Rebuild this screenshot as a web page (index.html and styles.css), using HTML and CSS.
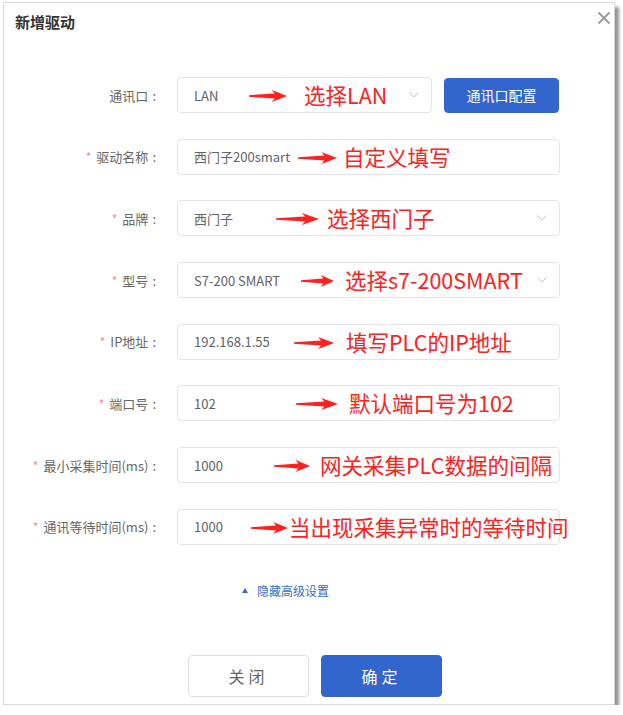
FILE: index.html
```html
<!DOCTYPE html>
<html lang="zh-CN">
<head>
    <meta charset="UTF-8">
    <meta name="viewport" content="width=device-width, initial-scale=1.0">
    <title>新增驱动</title>
    <link rel="stylesheet" href="styles.css">
</head>
<body>
    <div class="dialog">
        <div class="dialog-header">
            <span class="dialog-title">新增驱动</span>
            <svg class="close-icon" viewBox="0 0 14 14" width="14" height="14">
                <path d="M1.5 1.5 L12.5 12.5 M12.5 1.5 L1.5 12.5" stroke="#9a9a9a" stroke-width="1.8" fill="none"/>
            </svg>
        </div>

        <div class="form">
            <div class="form-row">
                <label class="form-label">通讯口<span class="colon">:</span></label>
                <div class="field field-short select">
                    <span class="value">LAN</span>
                    <svg class="chevron" viewBox="0 0 10 6" width="10" height="6"><path d="M0.5 0.5 L5 5 L9.5 0.5" stroke="#c0c4cc" fill="none"/></svg>
                    <div class="note note-1">
                        <svg class="arrow" viewBox="0 0 40 12" preserveAspectRatio="none"><polygon points="0,5.2 27,3.4 24,0 40,6 24,12 27,8.6 0,6.8"/></svg>
                        <span class="note-text">选择LAN</span>
                    </div>
                </div>
                <button class="btn btn-primary btn-config">通讯口配置</button>
            </div>

            <div class="form-row">
                <label class="form-label"><span class="required">*</span>驱动名称<span class="colon">:</span></label>
                <div class="field">
                    <span class="value">西门子200smart</span>
                    <div class="note note-2">
                        <svg class="arrow" viewBox="0 0 40 12" preserveAspectRatio="none"><polygon points="0,5.2 27,3.4 24,0 40,6 24,12 27,8.6 0,6.8"/></svg>
                        <span class="note-text">自定义填写</span>
                    </div>
                </div>
            </div>

            <div class="form-row">
                <label class="form-label"><span class="required">*</span>品牌<span class="colon">:</span></label>
                <div class="field select">
                    <span class="value">西门子</span>
                    <svg class="chevron" viewBox="0 0 10 6" width="10" height="6"><path d="M0.5 0.5 L5 5 L9.5 0.5" stroke="#c0c4cc" fill="none"/></svg>
                    <div class="note note-3">
                        <svg class="arrow" viewBox="0 0 40 12" preserveAspectRatio="none"><polygon points="0,5.2 27,3.4 24,0 40,6 24,12 27,8.6 0,6.8"/></svg>
                        <span class="note-text">选择西门子</span>
                    </div>
                </div>
            </div>

            <div class="form-row">
                <label class="form-label"><span class="required">*</span>型号<span class="colon">:</span></label>
                <div class="field select">
                    <span class="value">S7-200 SMART</span>
                    <svg class="chevron" viewBox="0 0 10 6" width="10" height="6"><path d="M0.5 0.5 L5 5 L9.5 0.5" stroke="#c0c4cc" fill="none"/></svg>
                    <div class="note note-4">
                        <svg class="arrow" viewBox="0 0 40 12" preserveAspectRatio="none"><polygon points="0,5.2 27,3.4 24,0 40,6 24,12 27,8.6 0,6.8"/></svg>
                        <span class="note-text">选择s7-200SMART</span>
                    </div>
                </div>
            </div>

            <div class="form-row">
                <label class="form-label"><span class="required">*</span>IP地址<span class="colon">:</span></label>
                <div class="field">
                    <span class="value">192.168.1.55</span>
                    <div class="note note-5">
                        <svg class="arrow" viewBox="0 0 40 12" preserveAspectRatio="none"><polygon points="0,5.2 27,3.4 24,0 40,6 24,12 27,8.6 0,6.8"/></svg>
                        <span class="note-text">填写PLC的IP地址</span>
                    </div>
                </div>
            </div>

            <div class="form-row">
                <label class="form-label"><span class="required">*</span>端口号<span class="colon">:</span></label>
                <div class="field">
                    <span class="value">102</span>
                    <div class="note note-6">
                        <svg class="arrow" viewBox="0 0 40 12" preserveAspectRatio="none"><polygon points="0,5.2 27,3.4 24,0 40,6 24,12 27,8.6 0,6.8"/></svg>
                        <span class="note-text">默认端口号为102</span>
                    </div>
                </div>
            </div>

            <div class="form-row">
                <label class="form-label"><span class="required">*</span>最小采集时间(ms)<span class="colon">:</span></label>
                <div class="field">
                    <span class="value">1000</span>
                    <div class="note note-7">
                        <svg class="arrow" viewBox="0 0 40 12" preserveAspectRatio="none"><polygon points="0,5.2 27,3.4 24,0 40,6 24,12 27,8.6 0,6.8"/></svg>
                        <span class="note-text">网关采集PLC数据的间隔</span>
                    </div>
                </div>
            </div>

            <div class="form-row">
                <label class="form-label"><span class="required">*</span>通讯等待时间(ms)<span class="colon">:</span></label>
                <div class="field">
                    <span class="value">1000</span>
                    <div class="note note-8">
                        <svg class="arrow" viewBox="0 0 40 12" preserveAspectRatio="none"><polygon points="0,5.2 27,3.4 24,0 40,6 24,12 27,8.6 0,6.8"/></svg>
                        <span class="note-text">当出现采集异常时的等待时间</span>
                    </div>
                </div>
            </div>
        </div>

        <div class="advanced-link">
            <span class="triangle"></span>隐藏高级设置
        </div>

        <div class="dialog-footer">
            <button class="btn btn-default">关闭</button>
            <button class="btn btn-primary btn-ok">确定</button>
        </div>
    </div>
</body>
</html>
```

FILE: styles.css
```css
body {
    margin: 0;
    background-color: #fff;
    font-family: "Noto Sans CJK SC", "Noto Sans", sans-serif;
}
.dialog {
    box-sizing: border-box;
    width: 612px;
    height: 703px;
    margin: 2px 0 0 3px;
    border: 1px solid #d9d9d9;
    background-color: #fff;
    box-shadow: 4px 5px 3px rgba(0, 0, 0, 0.42);
}
.dialog-header {
    display: flex;
    justify-content: space-between;
    align-items: flex-start;
    height: 38px;
    padding: 0 3px 0 11px;
}
.dialog-title {
    line-height: 38px;
    font-size: 15px;
    font-weight: bold;
    color: #333;
}
.close-icon {
    margin-top: 8px;
}
.form {
    display: flex;
    flex-direction: column;
    gap: 25.7px;
    padding-top: 36px;
}
.form-row {
    display: flex;
    align-items: center;
    height: 36px;
}
.form-label {
    width: 152px;
    text-align: right;
    font-size: 13px;
    color: #666;
    white-space: nowrap;
}
.required {
    color: #f78989;
    font-size: 12px;
    margin-right: 5px;
}
.colon {
    margin-left: 4px;
}
.field {
    position: relative;
    box-sizing: border-box;
    display: flex;
    align-items: center;
    width: 383px;
    height: 36px;
    margin-left: 21px;
    padding: 0 12px 0 16px;
    border: 1px solid #e2e4ea;
    border-radius: 4px;
    font-size: 13px;
    color: #606266;
}
.field-short {
    width: 255px;
}
.value {
    flex: 1;
}
.chevron {
    display: block;
}
.btn {
    box-sizing: border-box;
    font-family: inherit;
    border-radius: 4px;
    cursor: pointer;
}
.btn-primary {
    background-color: #3366cc;
    border: 1px solid #3366cc;
    color: #fff;
}
.btn-config {
    width: 115px;
    height: 35px;
    margin-left: 12px;
    font-size: 14px;
}

/* red annotation overlays */
.note {
    position: absolute;
    top: 0;
    left: 0;
    height: 100%;
    pointer-events: none;
}
.arrow {
    position: absolute;
    top: 12px;
    left: var(--arrow-x);
    width: var(--arrow-w);
    height: 12px;
    fill: #ff2020;
}
.note-text {
    position: absolute;
    top: 50%;
    left: var(--text-x);
    transform: translateY(-52%);
    font-size: 21.5px;
    color: #ff2020;
    white-space: nowrap;
}
.note-1 { --arrow-x: 71px; --arrow-w: 38px; --text-x: 126px; }
.note-2 { --arrow-x: 120px; --arrow-w: 39px; --text-x: 165px; }
.note-3 { --arrow-x: 98px; --arrow-w: 43px; --text-x: 149px; }
.note-4 { --arrow-x: 123px; --arrow-w: 33px; --text-x: 167px; }
.note-5 { --arrow-x: 116px; --arrow-w: 40px; --text-x: 168px; }
.note-6 { --arrow-x: 118px; --arrow-w: 42px; --text-x: 171px; }
.note-7 { --arrow-x: 96px; --arrow-w: 36px; --text-x: 142px; }
.note-8 { --arrow-x: 73px; --arrow-w: 37px; --text-x: 111px; }

.advanced-link {
    display: flex;
    align-items: center;
    margin: 37px 0 0 238px;
    height: 18px;
    font-size: 12px;
    color: #3a6bc8;
}
.triangle {
    width: 0;
    height: 0;
    margin-right: 9px;
    border-left: 3.5px solid transparent;
    border-right: 3.5px solid transparent;
    border-bottom: 5px solid #3a6bc8;
}
.dialog-footer {
    display: flex;
    justify-content: center;
    gap: 12px;
    margin-top: 55px;
    padding-left: 12px;
}
.dialog-footer .btn {
    width: 121px;
    height: 42px;
    font-size: 16px;
    letter-spacing: 4px;
}
.btn-default {
    background-color: #fff;
    border: 1px solid #dcdfe6;
    color: #666;
}
```
